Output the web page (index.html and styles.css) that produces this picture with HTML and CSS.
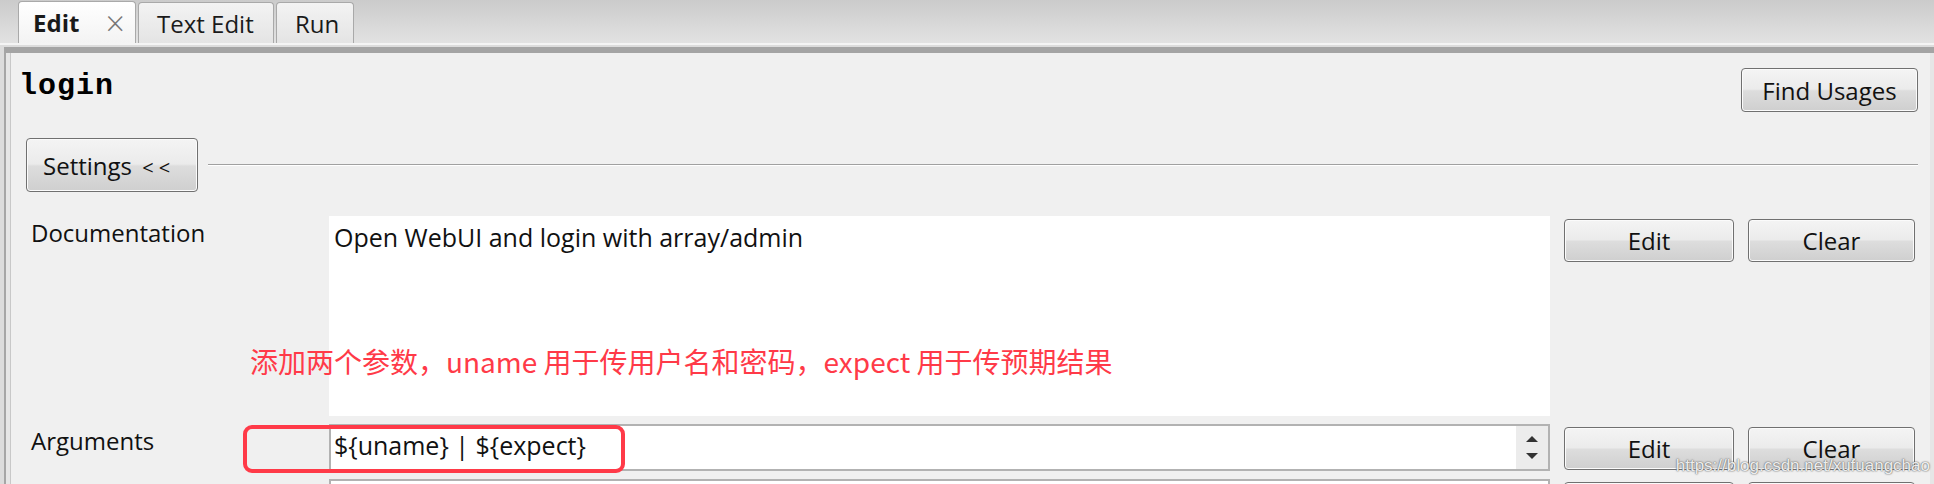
FILE: index.html
```html
<!DOCTYPE html>
<html lang="zh-CN">
<head>
    <meta charset="UTF-8">
    <meta name="viewport" content="width=device-width, initial-scale=1.0">
    <title>login - Edit</title>
    <link rel="stylesheet" href="styles.css">
</head>
<body>
    <div class="app">
        <div class="tabbar">
            <div class="tab active"><b>Edit</b><span class="close">&times;</span></div>
            <div class="tab">Text Edit</div>
            <div class="tab">Run</div>
        </div>
        <div class="frame">
            <div class="panel">
                <div class="head">
                    <h1 class="name">login</h1>
                    <button class="btn find">Find Usages</button>
                </div>
                <div class="settings">
                    <button class="btn toggle">Settings <span class="arrows">&lt;&lt;</span></button>
                    <div class="rule"></div>
                </div>
                <div class="fields">
                    <div class="label">Documentation</div>
                    <div class="doc">Open WebUI and login with array/admin</div>
                    <button class="btn small">Edit</button>
                    <button class="btn small">Clear</button>

                    <div class="label">Arguments</div>
                    <div class="input">
                        <span class="value">${uname} | ${expect}</span>
                        <span class="spin">
                            <span class="up"></span>
                            <span class="down"></span>
                        </span>
                    </div>
                    <button class="btn small">Edit</button>
                    <button class="btn small">Clear</button>

                    <div class="label"></div>
                    <div class="input"></div>
                    <button class="btn small"></button>
                    <button class="btn small"></button>
                </div>

                <!-- annotations drawn over the screenshot -->
                <p class="note">添加两个参数，uname 用于传用户名和密码，expect 用于传预期结果</p>
                <div class="mark"></div>
            </div>
        </div>
        <div class="watermark">https://blog.csdn.net/xufuangchao</div>
    </div>
</body>
</html>
```

FILE: styles.css
```css
body {
    margin: 0;
    background-color: #f0f0f0;
    font-family: "Open Sans", "Noto Sans", sans-serif;
    font-size: 24px;
    color: #111;
    overflow: hidden;
}
.app {
    position: relative;
    width: 1934px;
    height: 484px;
    overflow: hidden;
    background: #dcdcdc;
}
.tabbar {
    display: flex;
    align-items: flex-end;
    height: 43px;
    padding-left: 18px;
    background: linear-gradient(#cbcbcb, #e2e2e2);
    border-bottom: 2px solid #f4f4f4;
}
.tab {
    display: flex;
    align-items: center;
    height: 41px;
    margin-right: 2px;
    padding: 0 18px;
    border: 1px solid #a9a9a9;
    border-bottom: none;
    border-radius: 4px 4px 0 0;
    background: linear-gradient(#f3f3f3, #e4e4e4);
    color: #1a1a1a;
    box-sizing: border-box;
}
.tab.active {
    height: 42px;
    width: 118px;
    padding: 0 0 0 14px;
    background: linear-gradient(#ffffff, #f3f3f3);
}
.tab:nth-child(2) {
    width: 136px;
}
.tab:nth-child(3) {
    width: 78px;
}
.tab .close {
    margin-left: 26px;
    color: #777;
    font-size: 34px;
    font-weight: 300;
    line-height: 1;
}
.frame {
    margin-left: 4px;
    padding-left: 4px;
    border-left: 2px solid #a6a6a6;
    border-top: 6px solid #a4a4a4;
    margin-top: 2px;
    background: #e6e6e6;
    height: 440px;
}
.panel {
    position: relative;
    margin-right: 4px;
    height: 100%;
    padding: 0 12px 0 0;
    border-left: 1px solid #c8c8c8;
    background: #f0f0f0;
}
.head {
    display: flex;
    justify-content: space-between;
    align-items: flex-start;
    padding: 15px 0 0 8px;
}
.name {
    margin: 1px 0 0;
    font-family: "Liberation Mono", "Courier New", monospace;
    font-size: 30px;
    font-weight: bold;
    letter-spacing: 1px;
    color: #000;
}
.btn {
    font-family: inherit;
    font-size: 24px;
    color: #111;
    border: 1px solid #707070;
    border-radius: 4px;
    background: linear-gradient(#f4f4f4 0%, #ebebeb 48%, #dddddd 52%, #cfcfcf 100%);
    box-shadow: inset 0 0 0 1px #fbfbfb;
    padding: 0;
}
.find {
    width: 177px;
    height: 44px;
}
.settings {
    display: flex;
    align-items: center;
    margin-top: 26px;
    padding-left: 15px;
}
.toggle {
    width: 172px;
    height: 54px;
    text-align: left;
    padding-left: 16px;
}
.arrows {
    margin-left: 4px;
    font-size: 20px;
    letter-spacing: 5px;
}
.rule {
    flex: 1;
    margin-left: 10px;
    border-top: 1px solid #a0a0a0;
    border-bottom: 1px solid #ffffff;
}
.fields {
    display: grid;
    grid-template-columns: 284px 1221px 170px 167px;
    grid-template-rows: 200px 47px 47px;
    column-gap: 14px;
    row-gap: 8px;
    margin-top: 24px;
    padding-left: 20px;
}
.fields .btn {
    margin-top: 3px;
    height: 43px;
}
.label {
    color: #111;
}
.doc {
    background: #ffffff;
    padding: 4px 5px;
    font-size: 25px;
}
.input {
    display: flex;
    justify-content: space-between;
    border: 2px solid #b2b2b2;
    background: #ffffff;
}
.value {
    padding: 2px 3px;
    font-size: 25px;
}
.spin {
    display: flex;
    flex-direction: column;
    justify-content: center;
    gap: 11px;
    width: 32px;
    align-items: center;
    background: #ececec;
}
.up, .down {
    width: 0;
    height: 0;
    border-left: 6px solid transparent;
    border-right: 6px solid transparent;
}
.up {
    border-bottom: 6px solid #333;
}
.down {
    border-top: 6px solid #333;
}
.note {
    position: absolute;
    left: 239px;
    top: 288px;
    margin: 0;
    font-family: "Noto Sans CJK SC", sans-serif;
    font-size: 28px;
    color: #ff3a48;
}
.mark {
    position: absolute;
    left: 232px;
    top: 372px;
    width: 374px;
    height: 40px;
    border: 4px solid #ff3a48;
    border-radius: 9px;
}
.watermark {
    position: absolute;
    z-index: 2;
    right: 4px;
    bottom: 8px;
    font-family: "Liberation Sans", Arial, sans-serif;
    font-size: 17px;
    color: rgba(255, 255, 255, 0.9);
    text-shadow: 0 0 2px #666, 0 0 1px #666;
}
```
